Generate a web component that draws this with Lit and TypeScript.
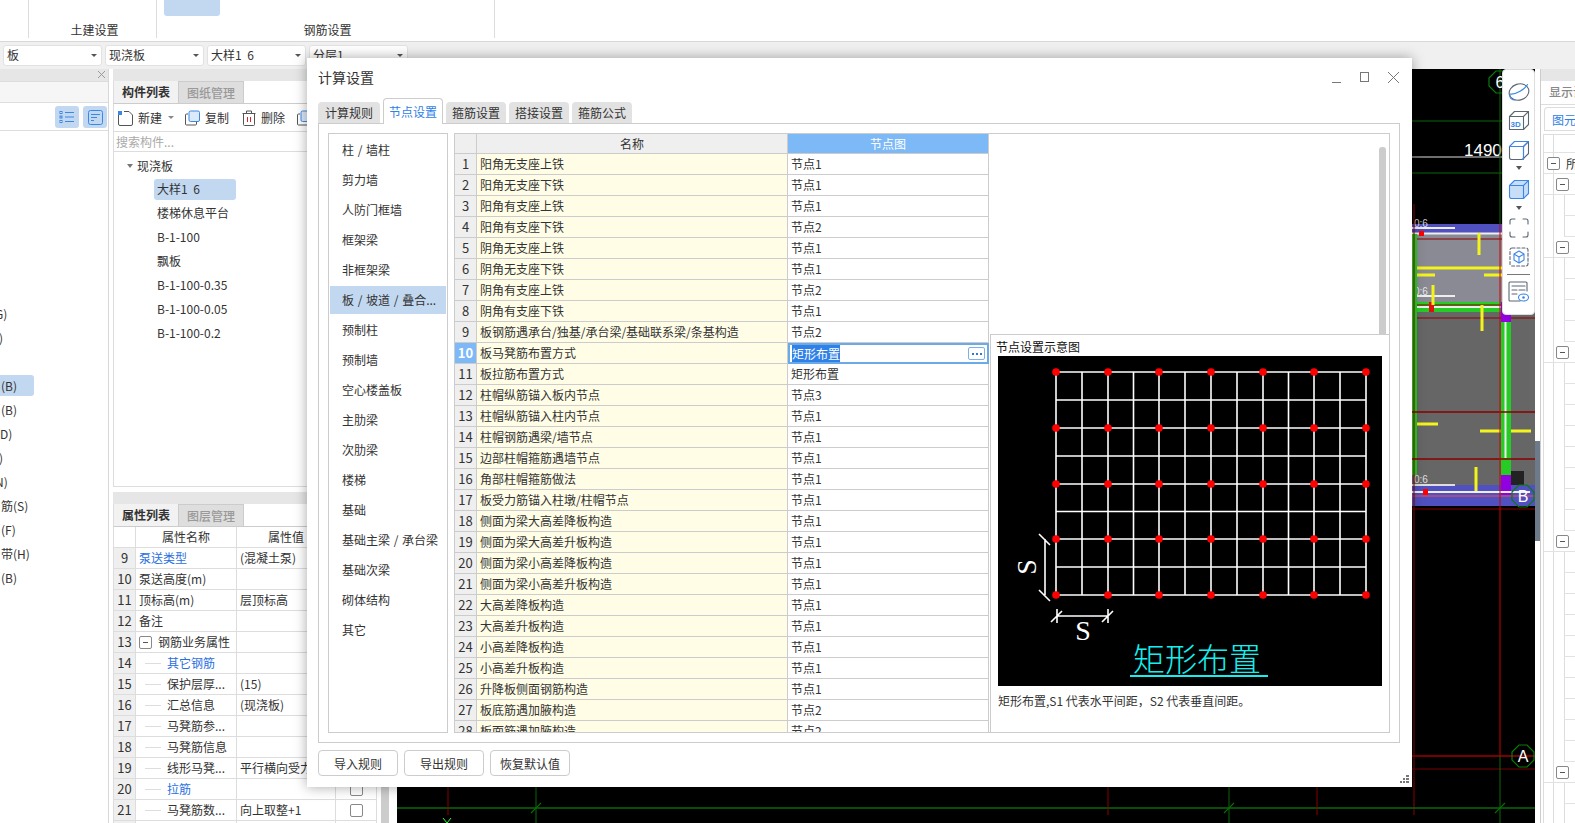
import {LitElement, css, html, svg} from 'lit';
import {customElement} from 'lit/decorators.js';

const FONT = css`"Noto Sans CJK SC", "Liberation Sans", sans-serif`;

const NODE_ROWS: Array<[string, string]> = [
  ['阳角无支座上铁', '节点1'],
  ['阳角无支座下铁', '节点1'],
  ['阳角有支座上铁', '节点1'],
  ['阳角有支座下铁', '节点2'],
  ['阴角无支座上铁', '节点1'],
  ['阴角无支座下铁', '节点1'],
  ['阴角有支座上铁', '节点2'],
  ['阴角有支座下铁', '节点1'],
  ['板钢筋遇承台/独基/承台梁/基础联系梁/条基构造', '节点2'],
  ['板马凳筋布置方式', '矩形布置'],
  ['板拉筋布置方式', '矩形布置'],
  ['柱帽纵筋锚入板内节点', '节点3'],
  ['柱帽纵筋锚入柱内节点', '节点1'],
  ['柱帽钢筋遇梁/墙节点', '节点1'],
  ['边部柱帽箍筋遇墙节点', '节点1'],
  ['角部柱帽箍筋做法', '节点1'],
  ['板受力筋锚入柱墩/柱帽节点', '节点1'],
  ['侧面为梁大高差降板构造', '节点1'],
  ['侧面为梁大高差升板构造', '节点1'],
  ['侧面为梁小高差降板构造', '节点1'],
  ['侧面为梁小高差升板构造', '节点1'],
  ['大高差降板构造', '节点1'],
  ['大高差升板构造', '节点1'],
  ['小高差降板构造', '节点1'],
  ['小高差升板构造', '节点1'],
  ['升降板侧面钢筋构造', '节点1'],
  ['板底筋遇加腋构造', '节点2'],
  ['板面筋遇加腋构造', '节点2'],
];

const CATEGORIES = [
  '柱 / 墙柱', '剪力墙', '人防门框墙', '框架梁', '非框架梁', '板 / 坡道 / 叠合...',
  '预制柱', '预制墙', '空心楼盖板', '主肋梁', '次肋梁', '楼梯', '基础',
  '基础主梁 / 承台梁', '基础次梁', '砌体结构', '其它',
];

const TABS = ['计算规则', '节点设置', '箍筋设置', '搭接设置', '箍筋公式'];

// text, how far the row is pulled past the left window edge
const LEFT_TREE: Array<[string, number]> = [
  ['G)', -5], [')', -1], ['', 0], ['(B)', 1], ['(B)', 1], ['D)', 0], [')', -1],
  ['N)', -5], ['筋(S)', 1], ['(F)', 1], ['带(H)', 1], ['(B)', 1],
];

const COMPONENTS = ['大样1 6', '楼梯休息平台', 'B-1-100', '飘板', 'B-1-100-0.35', 'B-1-100-0.05', 'B-1-100-0.2'];

// no, name, value, kind: l = link, g = group, c = child, cl = child link
const PROPS: Array<[number, string, string, string]> = [
  [9, '泵送类型', '(混凝土泵)', 'l'],
  [10, '泵送高度(m)', '', ''],
  [11, '顶标高(m)', '层顶标高', ''],
  [12, '备注', '', ''],
  [13, '钢筋业务属性', '', 'g'],
  [14, '其它钢筋', '', 'cl'],
  [15, '保护层厚...', '(15)', 'c'],
  [16, '汇总信息', '(现浇板)', 'c'],
  [17, '马凳筋参...', '', 'c'],
  [18, '马凳筋信息', '', 'c'],
  [19, '线形马凳...', '平行横向受力筋', 'c'],
  [20, '拉筋', '', 'cl'],
  [21, '马凳筋数...', '向上取整+1', 'c'],
  [22, '', '', ''],
];

@customElement('cad-canvas')
class CadCanvas extends LitElement {
  static styles = css`
    :host { display: block; width: 1138px; height: 754px; overflow: hidden; background: #000; }
    svg { display: block; }
    text { font-family: "Liberation Sans", sans-serif; fill: #fff; }
  `;

  hline(y: number, x1: number, x2: number, color: string, w = 1) {
    return svg`<line x1=${x1} x2=${x2} y1=${y} y2=${y} stroke=${color} stroke-width=${w}></line>`;
  }

  vline(x: number, y1: number, y2: number, color: string, w = 1) {
    return svg`<line x1=${x} x2=${x} y1=${y1} y2=${y2} stroke=${color} stroke-width=${w}></line>`;
  }

  axisBubble(cx: number, cy: number, label: string) {
    return svg`
      <polygon fill="none" stroke="#0c7a0c" stroke-width="1.2"
        points="${cx - 11},${cy - 4} ${cx - 4},${cy - 11} ${cx + 4},${cy - 11} ${cx + 11},${cy - 4} ${cx + 11},${cy + 4} ${cx + 4},${cy + 11} ${cx - 4},${cy + 11} ${cx - 11},${cy + 4}"></polygon>
      <text x=${cx} y=${cy + 6} font-size="16" text-anchor="middle">${label}</text>`;
  }

  render() {
    const green = '#0a6a0a';
    const darkRed = '#8b0000';
    const yellow = '#f4f41c';
    return html`<svg width="1138" height="754" viewBox="397 69 1138 754">
      <rect x="1412" y="224" width="123" height="282" fill="#666"></rect>
      <rect x="1412" y="224" width="123" height="79" fill="#8a8a94"></rect>
      <rect x="1412" y="224" width="123" height="9" fill="#5050c0"></rect>
      <rect x="1412" y="485" width="123" height="21" fill="#5050c0"></rect>
      ${this.hline(121, 1412, 1502, green)}
      ${this.hline(173, 1412, 1502, green)}
      ${this.hline(157, 1412, 1502, '#ddd')}
      <text x="1464" y="156" font-size="17">1490</text>
      ${this.vline(1500, 69, 224, green)}
      ${this.axisBubble(1500, 82, '6')}
      ${this.hline(233.5, 1412, 1532, '#eee', 2)}
      ${this.hline(239, 1412, 1535, darkRed)}
      ${this.hline(228, 1412, 1455, '#eee', 2)}
      ${this.hline(296, 1412, 1455, '#eee', 2)}
      <text x="1414" y="227" font-size="10" fill-opacity=".8">0:6</text>
      <text x="1414" y="295" font-size="10" fill-opacity=".8">0:6</text>
      <rect x="1419" y="231" width="5" height="5" fill="#f00"></rect>
      <rect x="1412" y="302" width="90" height="10" fill="#25cc25"></rect>
      ${this.hline(307, 1412, 1502, '#eee', 2)}
      ${this.hline(305, 1412, 1535, darkRed)}
      ${this.hline(318, 1412, 1535, darkRed)}
      <rect x="1429" y="302" width="5" height="10" fill="#e01010"></rect>
      ${this.vline(1479, 233, 255, yellow, 3)}
      ${this.vline(1433, 285, 305, yellow, 3)}
      ${this.vline(1482, 305, 331, yellow, 3)}
      ${this.vline(1476, 467, 493, yellow, 3)}
      ${this.hline(268, 1412, 1502, yellow, 3)}
      ${this.hline(275, 1412, 1435, yellow, 3)}
      ${this.hline(275, 1484, 1502, yellow, 3)}
      ${this.hline(424, 1412, 1438, yellow, 3)}
      ${this.hline(431, 1480, 1531, yellow, 3)}
      <rect x="1412" y="234" width="5" height="241" fill="#25cc25"></rect>
      <rect x="1501" y="312" width="10" height="163" fill="#25cc25"></rect>
      ${this.vline(1505.5, 312, 458, '#eee', 2)}
      <rect x="1501" y="302" width="10" height="20" fill="#9000e0"></rect>
      <rect x="1501" y="475" width="10" height="20" fill="#9000e0"></rect>
      <rect x="1511" y="471" width="13" height="14" fill="#222"></rect>
      ${this.hline(412, 1412, 1535, darkRed, 1.5)}
      ${this.hline(459, 1412, 1535, darkRed, 1.5)}
      ${this.hline(485, 1412, 1455, '#ddd', 2)}
      <text x="1414" y="483" font-size="10" fill-opacity=".8">0:6</text>
      ${this.hline(492, 1412, 1530, '#eee', 2)}
      ${this.hline(496, 1412, 1535, '#f05050')}
      ${this.hline(509, 1412, 1535, darkRed)}
      <rect x="1423" y="489" width="5" height="6" fill="#f00"></rect>
      ${this.vline(1414, 204, 815, darkRed)}
      ${this.vline(1500, 224, 756, '#d00000')}
      ${this.hline(756, 397, 1535, '#a00000', 1.5)}
      ${this.hline(769, 397, 1535, '#7a0000')}
      ${this.hline(808, 397, 1535, green, 1.5)}
      ${this.vline(1500, 756, 823, green)}
      ${this.vline(536, 787, 823, green)}
      ${this.vline(1229, 787, 823, green)}
      ${this.vline(448, 787, 815, darkRed)}
      ${this.vline(1108, 787, 815, darkRed)}
      ${this.vline(1317, 787, 815, darkRed)}
      <path d="M531 813l10-10M1224 813l10-10M1495 813l10-10" stroke=${green} stroke-width="1.2"></path>
      <path d="M443 818l4 5 4-5" stroke="#3f3" fill="none"></path>
      ${this.axisBubble(1523, 496, 'B')}
      ${this.axisBubble(1523, 756, 'A')}
    </svg>`;
  }
}

@customElement('node-diagram')
class NodeDiagram extends LitElement {
  static styles = css`
    :host { display: block; width: 384px; height: 330px; }
    svg { display: block; background: #000; }
    text { fill: #fff; }
    .serif { font-family: "Liberation Serif", serif; font-size: 28px; }
    .title { font-family: ${FONT}; font-size: 32px; font-weight: 300; letter-spacing: 0; fill: #14f0f0; }
  `;

  render() {
    const xs = [1056, 1108, 1159, 1211, 1263, 1314, 1366];
    const ys = [372, 428, 484, 539, 595];
    const midX = xs.slice(0, -1).map((x, i) => (x + xs[i + 1]) / 2);
    const midY = ys.slice(0, -1).map((y, i) => (y + ys[i + 1]) / 2);
    return html`<svg width="384" height="330" viewBox="998 356 384 330">
      <g stroke="#fff" stroke-width="1.6">
        ${[...xs, ...midX].map((x) => svg`<line x1=${x} x2=${x} y1="372" y2="595"></line>`)}
        ${[...ys, ...midY].map((y) => svg`<line x1="1056" x2="1366" y1=${y} y2=${y}></line>`)}
        <path d="M1045 539v56M1039 534l11 11M1039 590l11 11M1057 616h51M1057 609v14M1108 609v14M1051 622l11-11M1102 622l11-11" fill="none"></path>
      </g>
      ${xs.map((x) => ys.map((y) => svg`<circle cx=${x} cy=${y} r="3.8" fill="#f00"></circle>`))}
      <text class="serif" transform="translate(1036 567) rotate(-90)" text-anchor="middle">S</text>
      <text class="serif" x="1083" y="640" text-anchor="middle">S</text>
      <text class="title" x="1197" y="671" text-anchor="middle">矩形布置</text>
      <rect x="1130" y="675" width="138" height="2" fill="#14f0f0"></rect>
    </svg>`;
  }
}

@customElement('calc-dialog')
class CalcDialog extends LitElement {
  static styles = css`
    :host {
      position: absolute; left: 307px; top: 58px; width: 1105px; height: 729px;
      box-sizing: border-box; display: flex; flex-direction: column;
      background: #fff; box-shadow: 0 0 12px rgba(0, 0, 0, .35);
      color: #333; font-size: 12px; padding: 0 12px 0 11px;
    }
    .titlebar { display: flex; align-items: center; height: 40px; flex: none; }
    .title { font-size: 14px; line-height: 36px; height: 38px; flex: 1; }
    .win { display: flex; gap: 14px; color: #777; }
    .win svg { display: block; }
    .tabs { display: flex; align-items: flex-end; height: 26px; flex: none; gap: 3px; position: relative; z-index: 1; }
    .tab { width: 60px; height: 21px; margin-bottom: 1px; line-height: 21px; text-align: center; background: #e2e2e2; border-radius: 4px 4px 0 0; }
    .tab:first-child { width: 62px; }
    .tab.on { width: 60px; height: 26px; margin-bottom: 0; line-height: 25px; color: #2f80e7; background: #fff; border: 1px solid #ccc; border-bottom: 0; box-sizing: border-box; }
    .body { flex: none; height: 620px; box-sizing: border-box; border: 1px solid #ccc; margin-top: -1px; padding: 9px; display: flex; gap: 6px; }
    .cats { width: 120px; flex: none; box-sizing: border-box; border: 1px solid #ccc; padding: 2px 1px 0; display: flex; flex-direction: column; gap: 2px; }
    .cat { height: 28px; line-height: 28px; padding-left: 12px; white-space: nowrap; overflow: hidden; word-spacing: 1px; }
    .cat.on { background: #c2d8f0; }
    .sheet { flex: 1; position: relative; overflow: hidden; box-sizing: border-box; border: 1px solid #ccc; }
    .grid { display: grid; grid-template-columns: 22px 311px 201px; grid-template-rows: 20px; grid-auto-rows: 21px; width: 534px; }
    .grid > div { box-sizing: border-box; border-right: 1px solid #ccc; border-bottom: 1px solid #ccc; line-height: 20px; padding-left: 3px; white-space: nowrap; overflow: hidden; }
    .grid > .head { height: 20px; line-height: 20px; text-align: center; background: #efefef; padding: 0; }
    .grid > .head.pick { background: #7db9f7; color: #fff; }
    .grid > .no { background: #efefef; text-align: center; padding: 0; font-size: 13px; }
    .grid > .no.pick { background: #7db9f7; color: #fff; font-weight: 700; }
    .grid > .name { background: #fffde6; }
    .grid > .editor { border: 2px solid #6aaae8; padding-left: 2px; line-height: 17px; display: flex; align-items: center; justify-content: space-between; }
    .sel { background: #2f80e7; color: #fff; }
    .more { width: 15px; height: 11px; margin-right: 2px; border: 1px solid #7db0ea; border-radius: 2px; color: #3578d0; display: flex; justify-content: center; align-items: center; gap: 2px; }
    .more i { width: 2px; height: 2px; background: #3578d0; }
    .scroll { position: absolute; right: 3px; top: 13px; width: 7px; height: 190px; background: #ccc; border-radius: 3px 3px 0 0; }
    .preview { position: absolute; left: 535px; top: 200px; right: 0; bottom: 0; box-sizing: border-box; background: #fff; border-top: 1px solid #ccc; border-left: 1px solid #ccc; padding-left: 7px; }
    .preview-title { color: #111; height: 21px; box-sizing: border-box; padding-top: 3px; line-height: 18px; margin-left: -2px; }
    .preview-note { margin-top: 7px; line-height: 16px; }
    .buttons { display: flex; gap: 6px; margin-top: 7px; }
    .btn { width: 80px; height: 26px; box-sizing: border-box; border: 1px solid #ccc; border-radius: 4px; line-height: 25px; text-align: center; }
    .grip { position: absolute; right: 3px; bottom: 3px; width: 9px; height: 9px; }
  `;

  renderEditor() {
    return html`<div class="editor"><span class="sel">矩形布置</span><span class="more"><i></i><i></i><i></i></span></div>`;
  }

  render() {
    return html`
      <div class="titlebar">
        <div class="title">计算设置</div>
        <div class="win">
          <svg width="14" height="14" stroke="#777" fill="none"><path d="M2 11.5h9"></path></svg>
          <svg width="14" height="14" stroke="#777" fill="none"><rect x="2.5" y="1.5" width="8" height="9"></rect></svg>
          <svg width="14" height="14" stroke="#777" fill="none"><path d="M2 1l11 11M13 1L2 12"></path></svg>
        </div>
      </div>
      <div class="tabs">
        ${TABS.map((t, i) => html`<div class="tab ${i === 1 ? 'on' : ''}">${t}</div>`)}
      </div>
      <div class="body">
        <div class="cats">
          ${CATEGORIES.map((c, i) => html`<div class="cat ${i === 5 ? 'on' : ''}">${c}</div>`)}
        </div>
        <div class="sheet">
          <div class="grid">
            <div class="head"></div><div class="head">名称</div><div class="head pick">节点图</div>
            ${NODE_ROWS.map(([name, node], i) => html`
              <div class="no ${i === 9 ? 'pick' : ''}">${i + 1}</div>
              <div class="name">${name}</div>
              ${i === 9 ? this.renderEditor() : html`<div>${node}</div>`}
            `)}
          </div>
          <div class="scroll"></div>
          <div class="preview">
            <div class="preview-title">节点设置示意图</div>
            <node-diagram></node-diagram>
            <div class="preview-note">矩形布置,S1 代表水平间距，S2 代表垂直间距。</div>
          </div>
        </div>
      </div>
      <div class="buttons">
        <div class="btn">导入规则</div><div class="btn">导出规则</div><div class="btn">恢复默认值</div>
      </div>
      <svg class="grip" viewBox="0 0 9 9" fill="#777"><path d="M6 0h3v2H6zM3 3h2v2H3zM6 3h3v2H6zM0 6h2v2H0zM3 6h2v2H3zM6 6h3v2H6z"></path></svg>
    `;
  }
}

@customElement('view-tools')
class ViewTools extends LitElement {
  static styles = css`
    :host {
      position: absolute; left: 1502px; top: 69px; width: 33px; height: 246px; box-sizing: border-box;
      background: #fff; border: 1px solid #ddd; border-radius: 4px;
      display: flex; flex-direction: column; align-items: center; padding-top: 11px;
    }
    svg { display: block; flex: none; fill: none; stroke-linejoin: round; stroke-linecap: round; }
    .caret { width: 0; height: 0; border: 3.5px solid transparent; border-top: 4px solid #555; border-bottom: 0; margin: 6px 0 9px; }
    .caret.second { margin: 7px 0 8px; }
    .rule { width: 23px; height: 1px; background: #777; margin: 7px 0 6px; }
    .gap { height: 9px; }
    .gap.small { height: 7px; }
    .gap.wide { height: 10px; }
    .badge { font: 700 8px "Liberation Sans", sans-serif; fill: #3b87e6; stroke: none; }
  `;

  render() {
    const grey = '#5a6672';
    const blue = '#3b87e6';
    return html`
      <svg width="22" height="22" viewBox="0 0 22 22">
        <ellipse cx="11" cy="11" rx="10" ry="8" transform="rotate(-18 11 11)" stroke=${grey} stroke-width="1.1"></ellipse>
        <path d="M2 13C8 14 17 8 19.5 3.5" stroke=${blue} stroke-width="1.1"></path>
        <path d="M2 14c-1 3 2 5 5 5" stroke=${blue} stroke-width="1.1"></path>
      </svg>
      <div class="gap small"></div>
      <svg width="22" height="20" viewBox="0 0 22 20" stroke=${grey} stroke-width="1.1">
        <path d="M1.5 6.5l5-5h14v13l-5 5h-14zM1.5 6.5h14v13M15.5 6.5l5-5"></path>
        <text class="badge" x="2.5" y="16.5">3D</text>
      </svg>
      <div class="gap wide"></div>
      <svg width="22" height="20" viewBox="0 0 22 20" stroke=${grey} stroke-width="1.1">
        <path d="M1.5 6.5v11a2 2 0 002 2h10a2 2 0 002-2v-11l5-5v12l-5 5"></path>
        <path d="M1.5 6.5l5-5h14l-5 5zM1.5 6.5h14v13" stroke=${blue}></path>
      </svg>
      <div class="caret"></div>
      <svg width="22" height="20" viewBox="0 0 22 20" stroke=${blue} stroke-width="1.1">
        <path d="M1.5 6.5l5-5h14v13l-5 5h-12a2 2 0 01-2-2z" fill="#c8ddf6"></path>
        <path d="M1.5 6.5h14v13M15.5 6.5l5-5"></path>
      </svg>
      <div class="caret second"></div>
      <svg width="20" height="20" viewBox="0 0 20 20" stroke=${grey} stroke-width="1.1">
        <path d="M1 6V3a2 2 0 012-2h3M14 1h3a2 2 0 012 2v3M19 14v3a2 2 0 01-2 2h-3M6 19H3a2 2 0 01-2-2v-3"></path>
      </svg>
      <div class="gap"></div>
      <svg width="20" height="20" viewBox="0 0 20 20" stroke-width="1.1">
        <rect x="1" y="1" width="18" height="18" rx="2" stroke=${grey} stroke-dasharray="3 2"></rect>
        <path d="M10 4l5 3v6l-5 3-5-3V7zM5 7l5 3 5-3M10 10v6" stroke=${blue}></path>
      </svg>
      <div class="rule"></div>
      <svg width="21" height="21" viewBox="0 0 21 21" stroke-width="1.1">
        <path d="M19 10V2a1 1 0 00-1-1H2a1 1 0 00-1 1v17a1 1 0 001 1h10" stroke=${grey}></path>
        <path d="M4 5h13M4 9h5M11 9h6M4 13h5" stroke=${grey}></path>
        <ellipse cx="15.5" cy="16.5" rx="5" ry="3.5" stroke=${blue} fill="#fff"></ellipse>
        <circle cx="15.5" cy="16.5" r="1.3" fill=${blue}></circle>
      </svg>
    `;
  }
}

@customElement('app-root')
export class AppRoot extends LitElement {
  static styles = css`
    :host {
      display: block; position: relative; width: 1575px; height: 823px; overflow: hidden;
      background: #fff; color: #333; font-family: ${FONT}; font-size: 12px;
    }
    .ribbon { height: 42px; display: flex; box-sizing: border-box; border-bottom: 1px solid #d8d8d8; }
    .group { box-sizing: border-box; height: 38px; border-right: 1px solid #ddd; position: relative; text-align: center; }
    .group span { position: absolute; left: 4px; right: 0; top: 21px; line-height: 17px; }
    .ribbon-on { width: 56px; height: 16px; margin-left: 7px; background: #c2d8f0; border-radius: 0 0 3px 3px; }
    .combos { height: 27px; box-sizing: border-box; background: #f0f0f0; display: flex; gap: 3px; padding: 3px 0 0 3px; }
    .combo { width: 99px; height: 21px; box-sizing: border-box; background: #fff; border: 1px solid #e2e2e2; border-radius: 3px; padding: 0 4px 1px 3px; display: flex; align-items: center; justify-content: space-between; line-height: 18px; word-spacing: 3px; }
    .combo i { width: 0; height: 0; border: 3px solid transparent; border-top: 3px solid #555; border-bottom: 0; }
    .work { display: flex; height: 754px; }
    .strip { height: 12px; background: #e6e6e6; flex: none; }
    .left { width: 109px; flex: none; box-sizing: border-box; border-right: 1px solid #d8d8d8; position: relative; }
    .left .close { position: absolute; right: 1px; top: 1px; color: #999; }
    .left .band { height: 22px; background: #f6f6f6; border-top: 1px solid #ddd; border-bottom: 1px solid #ddd; box-sizing: border-box; }
    .left .tools { height: 28px; box-sizing: border-box; border-bottom: 1px solid #ddd; display: flex; justify-content: flex-end; gap: 4px; padding: 3px 1px 0 0; }
    .tool-on { width: 24px; height: 22px; background: #c2d8f0; border-radius: 3px; display: flex; align-items: center; justify-content: center; }
    .left-tree { margin-top: 171px; display: flex; flex-direction: column; overflow: hidden; }
    .left-tree div { height: 24px; line-height: 24px; white-space: nowrap; }
    .left-tree .on { width: 34px; height: 21px; line-height: 21px; margin: 1px 0 2px; background: #c2d8f0; border-radius: 0 3px 3px 0; }
    .mid { width: 280px; margin-left: 4px; flex: none; display: flex; flex-direction: column; }
    .ptabs { display: flex; height: 23px; box-sizing: border-box; flex: none; border-bottom: 1px solid #ccc; border-left: 1px solid #ddd; }
    .ptab { width: 65px; line-height: 22px; box-sizing: border-box; text-align: center; font-weight: 700; background: #f2f2f2; border-right: 1px solid #ccc; }
    .ptab.off { background: #dedede; color: #999; font-weight: 500; border-top: 1px solid #ccc; }
    .box { border-left: 1px solid #ddd; border-right: 1px solid #ddd; }
    .tree-panel { height: 383px; flex: none; box-sizing: border-box; border-bottom: 1px solid #ddd; }
    .ctools { height: 28px; box-sizing: border-box; border-bottom: 1px solid #ddd; display: flex; align-items: center; padding-left: 4px; }
    .ctools svg { display: block; flex: none; fill: none; }
    .ctools span { margin: 0 0 0 5px; }
    .new-caret { width: 0; height: 0; border: 3px solid transparent; border-top: 3px solid #888; border-bottom: 0; margin: 0 11px 0 6px; }
    .search { height: 20px; line-height: 19px; box-sizing: border-box; border-bottom: 1px solid #ddd; color: #aaa; padding-left: 2px; }
    .root { display: flex; align-items: center; height: 27px; padding-left: 13px; gap: 4px; }
    .root i { width: 0; height: 0; border: 3.5px solid transparent; border-top: 4px solid #777; border-bottom: 0; }
    .comp { height: 24px; line-height: 24px; padding-left: 43px; white-space: nowrap; word-spacing: 3px; }
    .comp.on { position: relative; }
    .comp.on::before { content: ''; position: absolute; left: 40px; top: 2px; width: 82px; height: 21px; background: #c2d8f0; border-radius: 3px; z-index: -1; }
    .comp-list { position: relative; z-index: 0; margin-top: -2px; }
    .gap { height: 5px; flex: none; }
    .prop-head, .prop { display: grid; grid-template-columns: 22px 101px 99px 41px; }
    .prop-head { height: 21px; }
    .prop-head div, .prop div { box-sizing: border-box; border-right: 1px solid #ddd; border-bottom: 1px solid #ddd; white-space: nowrap; overflow: hidden; }
    .prop-head div { text-align: center; line-height: 19px; }
    .prop { height: 21px; line-height: 20px; }
    .prop .no { background: #efefef; text-align: center; font-size: 13px; }
    .prop .nm { padding-left: 3px; display: flex; align-items: center; }
    .prop .val { padding-left: 3px; }
    .prop .chk { display: flex; justify-content: center; align-items: center; }
    .chk i { width: 13px; height: 13px; box-sizing: border-box; border: 1px solid #888; border-radius: 2px; }
    .link { color: #2a6fe0; }
    .minus { width: 13px; height: 13px; flex: none; box-sizing: border-box; border: 1px solid #888; border-radius: 2px; position: relative; margin: 0 6px 0 0; }
    .minus::after { content: ''; position: absolute; left: 3px; right: 3px; top: 5px; height: 1px; background: #555; }
    .dash { width: 16px; height: 1px; background: #ddd; margin: 0 6px 0 6px; flex: none; }
    .prop-wrap { display: flex; }
    .prop-box { border-right: 0; }
    .vbar { width: 8px; height: 296px; background: #ccc; margin-left: 4px; flex: none; }
    cad-canvas { margin-left: 4px; flex: none; }
    .right { flex: none; width: 35px; margin-left: 5px; box-sizing: border-box; border-left: 1px solid #ccc; overflow: hidden; position: relative; }
    .right .head { height: 23px; line-height: 21px; padding-left: 8px; white-space: nowrap; color: #888; border-bottom: 1px solid #ddd; font-weight: 500; }
    .right .tabbox { height: 24px; margin: 2px 0 0 3px; padding-left: 7px; line-height: 23px; white-space: nowrap; color: #2f80e7; border: 1px solid #ddd; border-right: 0; border-radius: 4px 0 0 0; box-sizing: border-box; }
    .rows { margin-left: 2px; margin-top: 3px; border-left: 1px solid #ddd; border-top: 1px solid #ddd; background: linear-gradient(#ddd, #ddd) 9px 0 / 1px 100% no-repeat; }
    .rrow { height: 21px; box-sizing: border-box; border-bottom: 1px solid #e2e2e2; display: flex; align-items: center; white-space: nowrap; }
    .rrow .minus { margin: 0 6px 0 0; background: #fff; }
    .rrow.spacer { height: 18px; }
    .rrow.top { padding-left: 3px; }
    .rrow.grp { padding-left: 12px; color: #d9822b; }
    .rrow.leaf { margin-left: 20px; border-left: 1px solid #ddd; }
    .handle { position: absolute; left: 1535px; top: 441px; width: 5px; height: 100px; background: #6c7a89; }
    .ctools .trash { margin-left: 13px; }
    .ctools .paste { margin-left: 12px; }
    .g-first { width: 29px; }
    .g-civil { width: 128px; }
    .g-rebar { width: 338px; }
  `;

  renderRightRows() {
    const groups = [2, 4, 8, 10, 2];
    return html`
      <div class="rrow spacer"></div>
      <div class="rrow top"><span class="minus"></span>所</div>
      ${groups.map((n) => html`
        <div class="rrow grp"><span class="minus"></span>墙</div>
        ${Array.from({length: n}, () => html`<div class="rrow leaf"></div>`)}
      `)}
    `;
  }

  render() {
    return html`
      <div class="ribbon">
        <div class="group g-first"></div>
        <div class="group g-civil"><span>土建设置</span></div>
        <div class="group g-rebar"><div class="ribbon-on"></div><span>钢筋设置</span></div>
      </div>
      <div class="combos">
        ${['板', '现浇板', '大样1 6', '分层1'].map((c) => html`<div class="combo">${c}<i></i></div>`)}
      </div>
      <div class="work">
        <div class="left">
          <div class="strip"></div>
          <svg class="close" width="10" height="10" stroke="#999" fill="none"><path d="M1 1l7 7M8 1L1 8"></path></svg>
          <div class="band"></div>
          <div class="tools">
            <div class="tool-on">
              <svg width="16" height="14" fill="none" stroke="#3b87e6"><path d="M6 2.5h9M6 7h9M6 11.5h9"></path><rect x="1" y="1.5" width="2" height="2"></rect><rect x="1" y="6" width="2" height="2"></rect><rect x="1" y="10.5" width="2" height="2"></rect></svg>
            </div>
            <div class="tool-on">
              <svg width="15" height="15" fill="none" stroke="#3b87e6"><rect x=".5" y=".5" width="14" height="14" rx="2"></rect><path d="M3 4.5h9M3 7.5h6M3 10.5h3"></path></svg>
            </div>
          </div>
          <div class="left-tree">
            ${LEFT_TREE.map(([t, x], i) => html`<div class="${i === 3 ? 'on' : ''}" style="text-indent:${x}px">${t}</div>`)}
          </div>
        </div>
        <div class="mid">
          <div class="strip"></div>
          <div class="ptabs"><div class="ptab">构件列表</div><div class="ptab off">图纸管理</div></div>
          <div class="box tree-panel">
            <div class="ctools">
              <svg width="15" height="16" stroke="#555"><path d="M.5 5v9a1.5 1.5 0 001.5 1.5h11a1.5 1.5 0 001.5-1.5V5M6 1.5h5l3.5 3.5"></path><rect x="0" y="1" width="4" height="4" fill="#3b87e6" stroke="none"></rect></svg>
              <span>新建</span>
              <i class="new-caret"></i>
              <svg width="15" height="16" stroke="#555"><path d="M3 4H1.5A1 1 0 00.5 5v9a1 1 0 001 1h9a1 1 0 001-1v-2"></path><rect x="4" y="1" width="10.5" height="10.5" rx="1.5" fill="#dbe9fa" stroke="#3b87e6"></rect></svg>
              <span>复制</span>
              <svg class="trash" width="14" height="16" stroke="#555"><path d="M.5 3.5h13M4.500 3.500V1h5v2.500M1.500 3.500v11a1 1 0 001 1h9a1 1 0 001-1v-11"></path><path d="M5.5 7v5M8.5 7v5" stroke="#e02020"></path></svg>
              <span>删除</span>
              <svg class="paste" width="15" height="16" stroke="#555"><path d="M3 4H1.5A1 1 0 00.5 5v9a1 1 0 001 1h9a1 1 0 001-1v-2"></path><rect x="4" y="1" width="10.5" height="10.5" rx="1.5" fill="#dbe9fa" stroke="#3b87e6"></rect></svg>
            </div>
            <div class="search">搜索构件...</div>
            <div class="root"><i></i>现浇板</div>
            <div class="comp-list">
              ${COMPONENTS.map((c, i) => html`<div class="comp ${i === 0 ? 'on' : ''}">${c}</div>`)}
            </div>
          </div>
          <div class="gap"></div>
          <div class="strip"></div>
          <div class="ptabs"><div class="ptab">属性列表</div><div class="ptab off">图层管理</div></div>
          <div class="prop-wrap">
            <div class="box prop-box">
              <div class="prop-head"><div></div><div>属性名称</div><div>属性值</div><div></div></div>
              ${PROPS.map(([no, name, val, kind]) => html`
                <div class="prop">
                  <div class="no">${no}</div>
                  <div class="nm">
                    ${kind === 'g' ? html`<span class="minus"></span>` : ''}
                    ${kind === 'c' || kind === 'cl' ? html`<span class="dash"></span>` : ''}
                    <span class="${kind === 'l' || kind === 'cl' ? 'link' : ''}">${name}</span>
                  </div>
                  <div class="val">${val}</div>
                  <div class="chk"><i></i></div>
                </div>`)}
            </div>
            <div class="vbar"></div>
          </div>
        </div>
        <cad-canvas></cad-canvas>
        <div class="right">
          <div class="strip"></div>
          <div class="head">显示设置</div>
          <div class="tabbox">图元显示</div>
          <div class="rows">${this.renderRightRows()}</div>
        </div>
      </div>
      <div class="handle"></div>
      <view-tools></view-tools>
      <calc-dialog></calc-dialog>
    `;
  }
}
